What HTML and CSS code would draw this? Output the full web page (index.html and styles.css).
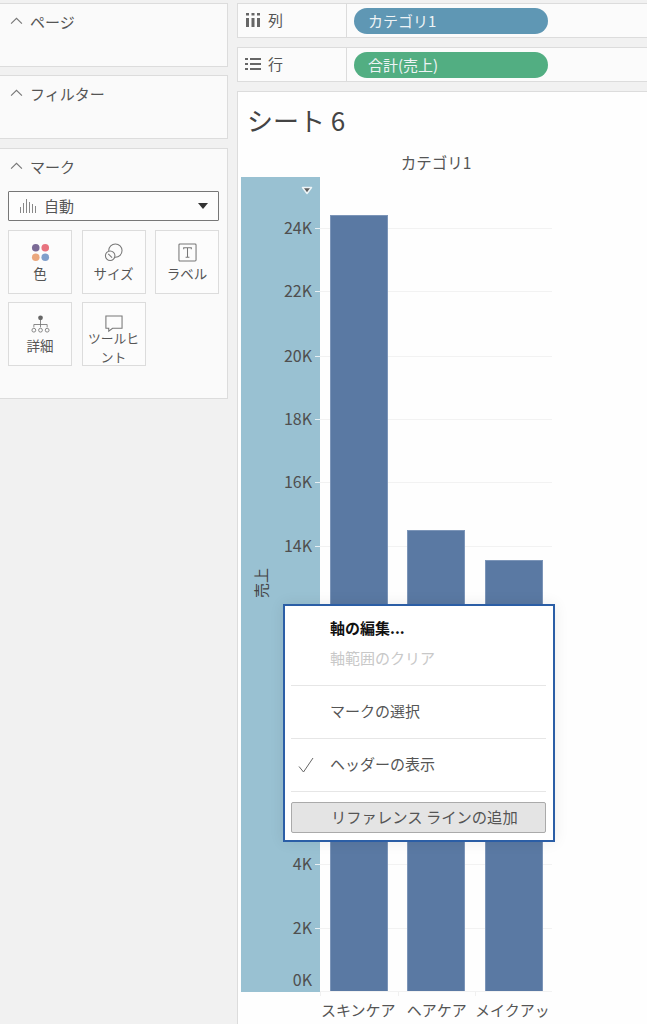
FILE: index.html
```html
<!DOCTYPE html>
<html lang="ja">
<head>
<meta charset="utf-8">
<title>シート 6</title>
<link rel="stylesheet" href="styles.css">
</head>
<body>
<aside class="sidebar">
  <section class="panel panel-short">
    <h2 class="panel-title"><svg class="caret" viewBox="0 0 12 7"><path d="M1 6 6 1l5 5"/></svg>ページ</h2>
  </section>
  <section class="panel panel-short">
    <h2 class="panel-title"><svg class="caret" viewBox="0 0 12 7"><path d="M1 6 6 1l5 5"/></svg>フィルター</h2>
  </section>
  <section class="panel panel-marks">
    <h2 class="panel-title"><svg class="caret" viewBox="0 0 12 7"><path d="M1 6 6 1l5 5"/></svg>マーク</h2>
    <div class="select">
      <svg class="select-icon" viewBox="0 0 16 16"><path d="M1 15V9M4 15V5M7 15V1M10 15V4M13 15V6M16 15V8"/></svg>
      <span>自動</span>
      <i class="select-arrow"></i>
    </div>
    <div class="mark-grid">
      <div class="mark-card">
        <svg class="mark-icon" viewBox="0 0 20 20"><circle cx="5" cy="5" r="4" fill="#7b6a96"/><circle cx="15" cy="5" r="4" fill="#e8737f"/><circle cx="5" cy="15" r="4" fill="#eba87e"/><circle cx="15" cy="15" r="4" fill="#7f9fcb"/></svg>
        <span>色</span>
      </div>
      <div class="mark-card">
        <svg class="mark-icon line" viewBox="0 0 20 20"><circle cx="12" cy="8" r="7"/><circle cx="6.500" cy="13.500" r="5" fill="#fafafa"/><path d="m4.500 11.500 4 4"/></svg>
        <span>サイズ</span>
      </div>
      <div class="mark-card">
        <svg class="mark-icon line" viewBox="0 0 20 20"><rect x="1" y="1" width="18" height="18" rx="1"/><path d="M6 6.500V5h8v1.500M10 5v10M8 15h4"/></svg>
        <span>ラベル</span>
      </div>
      <div class="mark-card">
        <svg class="mark-icon line thin" viewBox="0 0 20 20"><circle cx="10" cy="3" r="2.500" fill="#666" stroke="none"/><path d="M10 5v8M3 10h14M3 10v3M17 10v3"/><circle cx="3" cy="16" r="2"/><circle cx="10" cy="16" r="2"/><circle cx="17" cy="16" r="2"/></svg>
        <span>詳細</span>
      </div>
      <div class="mark-card">
        <svg class="mark-icon line" viewBox="0 0 20 20"><path d="M2 1h17v13H9l-4 3v-3H2z"/></svg>
        <span class="tooltip-label">ツールヒント</span>
      </div>
    </div>
  </section>
</aside>

<main class="main">
  <div class="shelf">
    <div class="shelf-label">
      <svg class="shelf-icon" viewBox="0 0 14 14"><path d="M1.500 5v9M7 5v9M12.500 5v9M1.500 0v2.500M7 0v2.500M12.500 0v2.500" stroke-width="3"/></svg>
      <span>列</span>
    </div>
    <div class="shelf-body"><span class="pill pill-blue">カテゴリ1</span></div>
  </div>
  <div class="shelf">
    <div class="shelf-label">
      <svg class="shelf-icon shelf-icon-rows" viewBox="0 0 16 14"><path d="M5 2h11M5 7h11M5 12h11M0 2h3M0 7h3M0 12h3" stroke-width="2"/></svg>
      <span>行</span>
    </div>
    <div class="shelf-body"><span class="pill pill-green">合計(売上)</span></div>
  </div>

  <div class="view">
    <h1 class="sheet-title">シート 6</h1>
    <div class="col-header">カテゴリ1</div>
    <div class="chart">
      <div class="axis">
        <svg class="axis-menu" viewBox="0 0 12 9"><path d="M1.500 1.500h9L6 7.500z"/></svg>
        <span class="axis-title">売上</span>
        <span class="tick" style="top:51px">24K</span>
        <span class="tick" style="top:114px">22K</span>
        <span class="tick" style="top:179px">20K</span>
        <span class="tick" style="top:242px">18K</span>
        <span class="tick" style="top:305px">16K</span>
        <span class="tick" style="top:369px">14K</span>
        <span class="tick" style="top:687px">4K</span>
        <span class="tick" style="top:751px">2K</span>
        <span class="tick tick-zero" style="top:803px">0K</span>
      </div>
      <div class="plot">
        <i class="grid" style="top:51px"></i>
        <i class="grid" style="top:114px"></i>
        <i class="grid" style="top:179px"></i>
        <i class="grid" style="top:242px"></i>
        <i class="grid" style="top:305px"></i>
        <i class="grid" style="top:369px"></i>
        <i class="grid" style="top:687px"></i>
        <i class="grid" style="top:751px"></i>
        <div class="bar" style="height:776px"></div>
        <div class="bar" style="height:461px"></div>
        <div class="bar" style="height:431px"></div>
      </div>
    </div>
    <div class="x-labels">
      <span class="x-label">スキンケア</span>
      <span class="x-label">ヘアケア</span>
      <span class="x-label">メイクアップ</span>
    </div>

    <div class="popup">
      <div class="menu-group">
        <div class="menu-item bold">軸の編集...</div>
        <div class="menu-item disabled">軸範囲のクリア</div>
      </div>
      <div class="menu-group">
        <div class="menu-item">マークの選択</div>
      </div>
      <div class="menu-group">
        <div class="menu-item">
          <svg class="check" viewBox="0 0 16 16"><path d="M1 9.500 5.500 15 15 1"/></svg>
          ヘッダーの表示
        </div>
      </div>
      <div class="menu-button">リファレンス ラインの追加</div>
    </div>
  </div>
</main>
</body>
</html>
```
FILE: styles.css
```css
* { box-sizing: border-box; }

html, body { height: 100%; }

body {
  margin: 0;
  height: 1024px;
  overflow: hidden;
  display: flex;
  gap: 9px;
  padding-top: 3px;
  background: #f1f1f1;
  color: #555;
  font-family: "Noto Sans CJK JP", "Noto Sans", sans-serif;
  font-size: 15px;
}

.sidebar {
  width: 228px;
  flex: none;
  display: flex;
  flex-direction: column;
  gap: 8px;
}

.panel {
  background: #fafafa;
  border: 1px solid #dcdcdc;
  border-left: 0;
}

.panel-short { height: 64px; }
.panel + .panel-marks { margin-top: 1px; }
.panel-marks { height: 251px; }

.panel-title {
  margin: 0;
  padding: 8px 0 0 10px;
  display: flex;
  align-items: center;
  gap: 7px;
  font-size: 15px;
  font-weight: 400;
  line-height: 20px;
}

.caret {
  width: 13px;
  height: 8px;
  fill: none;
  stroke: #777;
  stroke-width: 1;
  margin-bottom: 3px;
}

.select {
  margin: 14px 8px 0 8px;
  height: 30px;
  border: 1px solid #777;
  background: #fdfdfd;
  border-radius: 1px;
  display: flex;
  align-items: center;
  padding: 0 10px;
  gap: 8px;
}

.select span { margin-bottom: 2px; }

.select-icon {
  width: 17px;
  height: 16px;
  fill: none;
  stroke: #888;
  stroke-width: 1;
}

.select-arrow {
  margin-left: auto;
  border: 5px solid transparent;
  border-top: 6px solid #333;
  border-bottom: 0;
}

.mark-grid {
  margin: 9px 0 0 8px;
  display: grid;
  grid-template-columns: repeat(3, 64px);
  grid-auto-rows: 64px;
  gap: 8px 9.500px;
}

.mark-card {
  border: 1px solid #dcdcdc;
  background: #fcfcfc;
  overflow: hidden;
  display: flex;
  flex-direction: column;
  align-items: center;
  padding-top: 12px;
  text-align: center;
  font-size: 13.500px;
  line-height: 20px;
}

.mark-icon {
  width: 19px;
  height: 19px;
  flex: none;
  margin-bottom: 1px;
}

.line {
  fill: none;
  stroke: #777;
  stroke-width: 1.100;
}

.thin { stroke-width: 0.900; }

.tooltip-label {
  font-size: 12.800px;
  line-height: 19px;
  width: 54px;
  margin-top: -7px;
}

.main {
  flex: 1;
  min-width: 0;
  display: flex;
  flex-direction: column;
  gap: 9px;
}

.shelf {
  height: 35px;
  border: 1px solid #dcdcdc;
  border-right: 0;
  background: #fbfbfb;
  display: flex;
}

.shelf-label {
  width: 109px;
  flex: none;
  border-right: 1px solid #dcdcdc;
  display: flex;
  align-items: center;
  gap: 8px;
  padding-left: 8px;
  padding-bottom: 2px;
  font-size: 15px;
}

.shelf-label span { margin-bottom: 1px; }

.shelf-icon {
  width: 14px;
  height: 14px;
  fill: none;
  stroke: #666;
}

.shelf-icon-rows {
  width: 16px;
  margin: 0 -1px;
}

.shelf-body {
  flex: 1;
  padding: 4px 7px;
}

.pill {
  display: block;
  width: 194px;
  height: 26px;
  border-radius: 13px;
  padding-left: 14px;
  color: #eef3f5;
  font-size: 15px;
  line-height: 25px;
}

.pill-blue { background: #5f97b4; }
.pill-green { background: #52ae82; }

.view {
  position: relative;
  flex: 1;
  background: #fefefe;
  border: 1px solid #dcdcdc;
  border-right: 0;
  padding: 0 0 0 3px;
}

.sheet-title {
  margin: 0;
  padding: 10px 0 0 6px;
  font-size: 26px;
  line-height: 36px;
  font-weight: 400;
  color: #444;
}

.col-header {
  width: 232px;
  height: 37px;
  padding-top: 14px;
  margin-left: 79px;
  text-align: center;
  font-size: 15.500px;
  line-height: 20px;
  color: #555;
}

.chart {
  display: flex;
  height: 815px;
  margin-top: 2px;
}

.axis {
  position: relative;
  width: 79px;
  flex: none;
  background: #99c1d2;
}

.axis-menu {
  position: absolute;
  top: 9px;
  right: 7px;
  width: 12px;
  height: 9px;
  fill: #5e5e5e;
  stroke: #eef4f7;
  stroke-width: 1.500;
  stroke-linejoin: round;
}

.axis-title {
  position: absolute;
  left: 5px;
  top: 396px;
  width: 30px;
  transform: rotate(-90deg);
  font-size: 15px;
  line-height: 20px;
  color: #444;
}

.tick {
  position: absolute;
  right: 8px;
  margin-top: -1px;
  transform: translateY(-50%);
  font-size: 16px;
  line-height: 18px;
  color: #4f4f4f;
}

.tick::after {
  content: "";
  position: absolute;
  left: calc(100% + 3px);
  top: 50%;
  margin-top: 1px;
  width: 5px;
  height: 1px;
  background: #e8f0f4;
}

.tick-zero::after { display: none; }

.plot {
  position: relative;
  width: 232px;
  display: flex;
  align-items: flex-end;
  gap: 19.300px;
  padding-left: 10px;
  border-bottom: 1px solid #f2f2f2;
}

.grid {
  position: absolute;
  left: 0;
  right: 0;
  height: 1px;
  background: #f2f2f2;
}

.bar {
  position: relative;
  width: 58px;
  background: #5a79a3;
  border: 1px solid #7c95b8;
  border-width: 1px 1px 0;
}

.x-labels {
  display: flex;
  width: 229px;
  margin-left: 79px;
  height: 32px;
  font-size: 15px;
  line-height: 20px;
  white-space: nowrap;
  overflow: hidden;
}

.x-label {
  position: relative;
  width: 77.500px;
  flex: none;
  padding-top: 8px;
  height: 32px;
  border-left: 1px solid #f0f0f0;
  text-align: center;
  border-image: linear-gradient(#f0f0f0 5px, transparent 5px) 1;
}

.x-label:first-child { padding-right: 3px; }

.x-label:last-child {
  text-align: left;
  width: 74px;
  padding-left: 0;
  text-indent: -1px;
  overflow: hidden;
}

.popup {
  position: absolute;
  left: 45px;
  top: 512px;
  width: 272px;
  height: 238px;
  background: #fff;
  border: 2px solid #2b5ea6;
  box-shadow: 0 0 14px rgba(0, 0, 0, 0.08);
  padding: 0 7px 0 6px;
  display: flex;
  flex-direction: column;
  font-size: 15px;
}

.menu-group {
  display: flex;
  flex-direction: column;
  justify-content: center;
  border-bottom: 1px solid #e6e6e6;
  height: 53px;
  padding-bottom: 4px;
}

.menu-group:first-child {
  height: 80px;
  justify-content: flex-start;
  padding-top: 6px;
  padding-bottom: 0;
}

.menu-item {
  position: relative;
  padding-left: 39px;
  height: 31px;
  line-height: 31px;
  color: #555;
}

.menu-item.disabled {
  height: 30px;
  line-height: 29px;
  color: #c8c8c8;
}

.menu-item.bold { font-weight: 700; color: #111; }

.check {
  position: absolute;
  left: 7px;
  top: 9px;
  width: 16px;
  height: 16px;
  fill: none;
  stroke: #666;
  stroke-width: 1;
}

.menu-button {
  margin-top: 10px;
  height: 31px;
  border: 1px solid #aaa;
  border-radius: 2px;
  background: #e4e4e4;
  padding-left: 39px;
  font-size: 15.300px;
  line-height: 26px;
  color: #555;
}
```
